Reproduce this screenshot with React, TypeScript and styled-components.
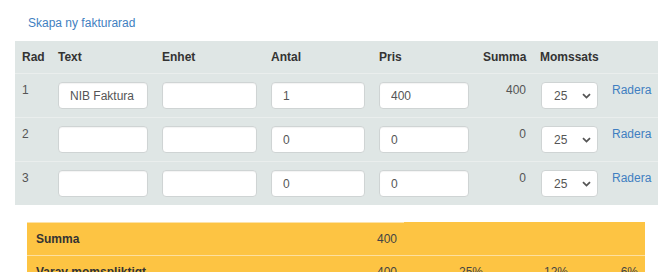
import React from "react";
import styled, { createGlobalStyle } from "styled-components";

const Global = createGlobalStyle`
  html, body { margin: 0; padding: 0; background: #fff; }
  body { font-family: "Liberation Sans", Arial, sans-serif; font-size: 12px; color: #333; }
`;

const Page = styled.div`
  padding: 15px 11px 0 15px;
  width: 643px;
`;

const LinkRow = styled.div`
  padding-left: 13px;
  line-height: 16px;
  margin-bottom: 10px;
`;

const Link = styled.a`
  color: #3f7fc1;
  text-decoration: none;
  font-size: 12px;
  cursor: pointer;
`;

const RowsTable = styled.table`
  width: 643px;
  table-layout: fixed;
  border-collapse: collapse;
  background: #dfe6e5;
`;

const Th = styled.th<{ $right?: boolean }>`
  padding: 8px 7px;
  line-height: 16px;
  font-size: 12px;
  font-weight: bold;
  color: #333;
  text-align: ${(p) => (p.$right ? "right" : "left")};
  vertical-align: middle;
`;

const Tr = styled.tr`
  border-top: 1px solid #eaeeed;
`;

const Td = styled.td<{ $right?: boolean }>`
  padding: 8px 7px;
  line-height: 17px;
  font-size: 12px;
  color: #555;
  vertical-align: top;
  text-align: ${(p) => (p.$right ? "right" : "left")};
`;

const Input = styled.input`
  display: block;
  box-sizing: border-box;
  width: 100%;
  height: 27px;
  margin: 0;
  padding: 0 11px;
  border: 1px solid #cfd4d4;
  border-radius: 4px;
  background: #fff;
  box-shadow: inset 0 1px 1px rgba(0, 0, 0, 0.05);
  font-family: "Liberation Sans", Arial, sans-serif;
  font-size: 12px;
  color: #555;
  outline: none;
`;

const SelectWrap = styled.div`
  position: relative;
  width: 57px;
  margin-left: 1px;
`;

const Select = styled.select`
  display: block;
  box-sizing: border-box;
  width: 57px;
  height: 27px;
  margin: 0;
  padding: 0 0 0 12px;
  border: 1px solid #cfd4d4;
  border-radius: 4px;
  background: #fff;
  appearance: none;
  -webkit-appearance: none;
  font-family: "Liberation Sans", Arial, sans-serif;
  font-size: 12px;
  color: #555;
  outline: none;
`;

const Chevron = styled.svg`
  position: absolute;
  right: 7px;
  top: 11px;
  pointer-events: none;
`;

const Summary = styled.table`
  margin: 17px 0 0 12px;
  width: 618px;
  table-layout: fixed;
  border-collapse: collapse;
  background: #fdc443;
`;

const SRow = styled.tr<{ $first?: boolean }>`
  border-top: ${(p) => (p.$first ? "none" : "1px solid #fde0a0")};
`;

const STd = styled.td<{ $bold?: boolean; $right?: boolean; $topLine?: boolean }>`
  padding: 8px 7px 8px 9px;
  line-height: 16px;
  font-size: 12px;
  color: ${(p) => (p.$bold ? "#333" : "#444")};
  font-weight: ${(p) => (p.$bold ? "bold" : "normal")};
  text-align: ${(p) => (p.$right ? "right" : "left")};
  border-top: ${(p) => (p.$topLine ? "1px solid #fde3a8" : "none")};
`;

type Line = { id: number; text: string; antal: string; pris: string; summa: string };

const lines: Line[] = [
  { id: 1, text: "NIB Faktura", antal: "1", pris: "400", summa: "400" },
  { id: 2, text: "", antal: "0", pris: "0", summa: "0" },
  { id: 3, text: "", antal: "0", pris: "0", summa: "0" },
];

const colWidths = [36, 104, 109, 108, 104, 57, 72, 53];
const sumWidths = [290, 87, 86, 85, 70];

export default function App() {
  return (
    <Page>
      <Global />
      <LinkRow>
        <Link>Skapa ny fakturarad</Link>
      </LinkRow>
      <RowsTable>
        <colgroup>
          {colWidths.map((w, i) => (
            <col key={i} style={{ width: w }} />
          ))}
        </colgroup>
        <thead>
          <tr>
            <Th>Rad</Th>
            <Th>Text</Th>
            <Th>Enhet</Th>
            <Th>Antal</Th>
            <Th>Pris</Th>
            <Th $right>Summa</Th>
            <Th>Momssats</Th>
            <Th />
          </tr>
        </thead>
        <tbody>
          {lines.map((l) => (
            <Tr key={l.id}>
              <Td>{l.id}</Td>
              <Td>
                <Input defaultValue={l.text} />
              </Td>
              <Td>
                <Input defaultValue="" />
              </Td>
              <Td>
                <Input defaultValue={l.antal} />
              </Td>
              <Td>
                <Input defaultValue={l.pris} />
              </Td>
              <Td $right>{l.summa}</Td>
              <Td>
                <SelectWrap>
                  <Select defaultValue="25">
                    <option value="25">25</option>
                    <option value="12">12</option>
                    <option value="6">6</option>
                    <option value="0">0</option>
                  </Select>
                  <Chevron width="9" height="6" viewBox="0 0 9 6">
                    <path d="M1 1.2 L4.5 4.6 L8 1.2" fill="none" stroke="#555" strokeWidth="1.8" />
                  </Chevron>
                </SelectWrap>
              </Td>
              <Td>
                <Link>Radera</Link>
              </Td>
            </Tr>
          ))}
        </tbody>
      </RowsTable>
      <Summary>
        <colgroup>
          {sumWidths.map((w, i) => (
            <col key={i} style={{ width: w }} />
          ))}
        </colgroup>
        <tbody>
          <SRow $first>
            <STd $bold $topLine>Summa</STd>
            <STd $right $topLine>400</STd>
          </SRow>
          <SRow>
            <STd $bold>Varav momspliktigt</STd>
            <STd $right>400</STd>
            <STd $right>25%</STd>
            <STd $right>12%</STd>
            <STd $right>6%</STd>
          </SRow>
        </tbody>
      </Summary>
    </Page>
  );
}
